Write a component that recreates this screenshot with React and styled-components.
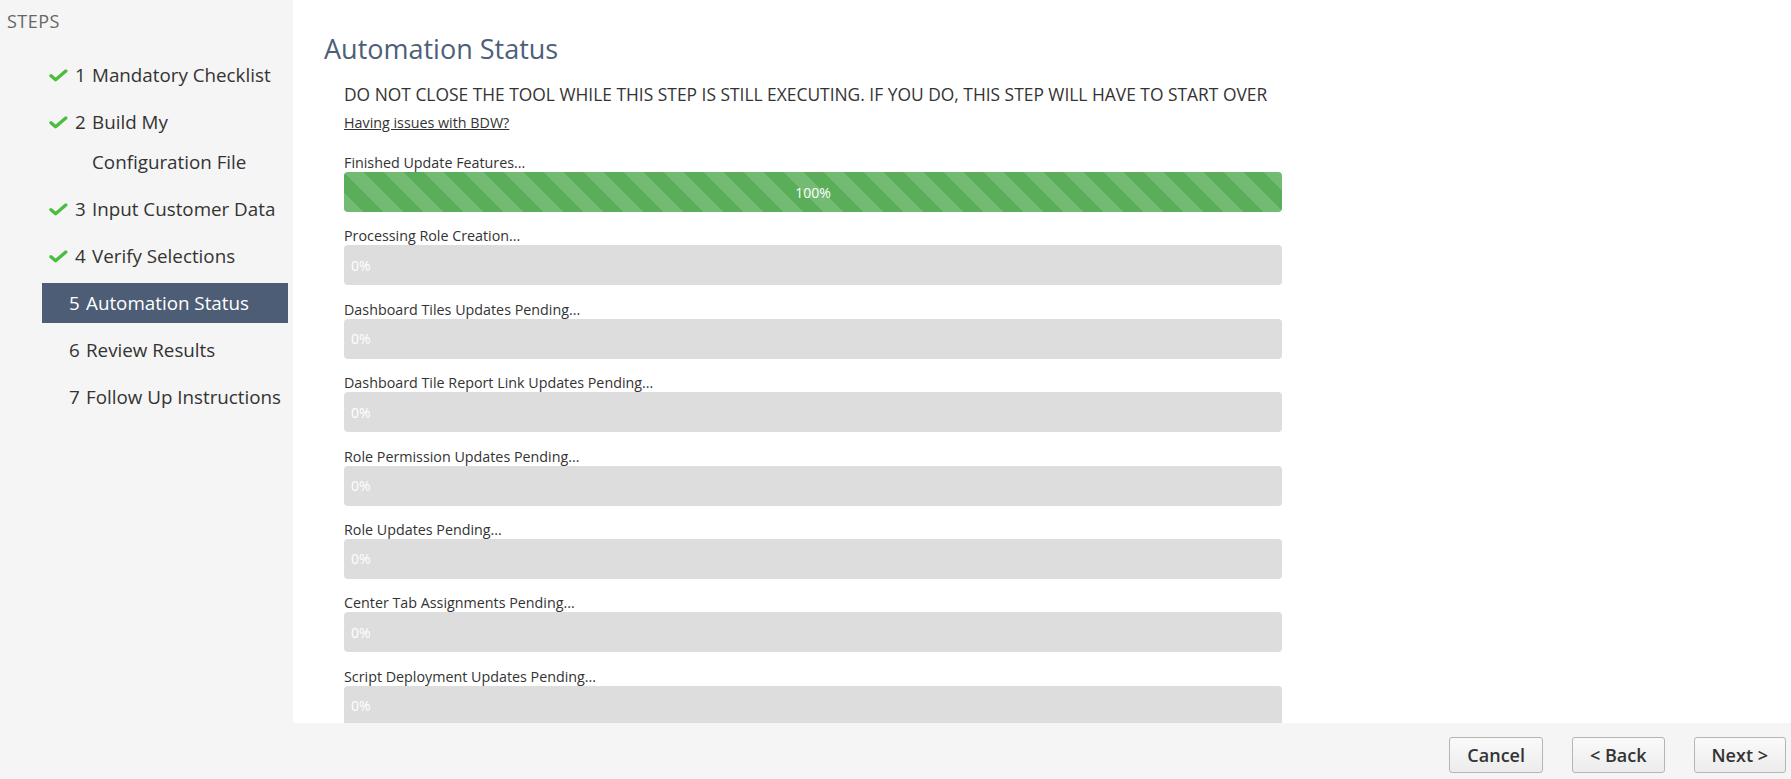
import React from "react";
import styled, { createGlobalStyle } from "styled-components";

const GlobalStyle = createGlobalStyle`
  html, body { margin: 0; padding: 0; }
  body {
    font-family: "Open Sans", "Noto Sans", "Liberation Sans", sans-serif;
    color: #333;
    background: #fff;
  }
  * { box-sizing: border-box; }
`;

const Page = styled.div`
  height: 100vh;
  display: grid;
  grid-template-rows: 1fr 56px;
  overflow: hidden;
`;

const Body = styled.div`
  display: flex;
  min-height: 0;
`;

const Sidebar = styled.aside`
  width: 293px;
  flex: none;
  background: #f5f5f5;
  padding: 9px 5px 0 0;
`;

const SidebarTitle = styled.div`
  font-size: 18px;
  line-height: 24px;
  letter-spacing: 0.5px;
  color: #666;
  padding-left: 7px;
  margin-bottom: 22px;
`;

const StepList = styled.ol`
  list-style: none;
  margin: 0;
  padding: 0 0 0 42px;
  display: flex;
  flex-direction: column;
  gap: 7px;
`;

const StepItem = styled.li`
  display: flex;
  align-items: flex-start;
  font-size: 18.8px;
  line-height: 40px;
  padding-left: ${(p) => (p.$done ? 7 : 27)}px;
  background: ${(p) => (p.$active ? "#4c5d75" : "transparent")};
  color: ${(p) => (p.$active ? "#fff" : "#333")};
`;

const IconSlot = styled.span`
  flex: none;
  height: 40px;
  width: 26px;
  display: flex;
  align-items: center;
`;

const StepNumber = styled.span`
  flex: none;
  width: 17px;
`;

const StepLabel = styled.span`
  flex: 1;
  min-width: 0;
`;

const Main = styled.main`
  flex: 1;
  min-width: 0;
  background: #fff;
  overflow: hidden;
  padding: 30px 0 0 31px;
`;

const Title = styled.h1`
  margin: 0;
  font-size: 27px;
  line-height: 38px;
  font-weight: 400;
  color: #4d6078;
`;

const Content = styled.div`
  width: 938px;
  margin: 14px 0 0 20px;
`;

const Warning = styled.p`
  margin: 0;
  font-size: 17.4px;
  line-height: 24px;
  color: #333;
  white-space: nowrap;
`;

const HelpLink = styled.a`
  display: inline-block;
  margin-top: 7px;
  font-size: 14.3px;
  line-height: 20px;
  color: #333;
  text-decoration: underline;
`;

const TaskList = styled.div`
  margin-top: 20px;
  display: flex;
  flex-direction: column;
  gap: 14.4px;
`;

const Task = styled.div``;

const TaskLabel = styled.div`
  font-size: 14.3px;
  line-height: 19px;
  color: #333;
`;

const Progress = styled.div`
  height: 40px;
  border-radius: 4px;
  background: #dddddd;
  overflow: hidden;
`;

const ProgressFill = styled.div`
  height: 100%;
  display: flex;
  align-items: center;
  font-size: 14px;
  color: #fff;
  justify-content: ${(p) => (p.$done ? "center" : "flex-start")};
  padding-left: ${(p) => (p.$done ? 0 : 7)}px;
  background-color: ${(p) => (p.$done ? "#5aae5a" : "transparent")};
  background-image: ${(p) =>
    p.$done
      ? "linear-gradient(45deg, rgba(255,255,255,.15) 25%, transparent 25%, transparent 50%, rgba(255,255,255,.15) 50%, rgba(255,255,255,.15) 75%, transparent 75%, transparent)"
      : "none"};
  background-size: 40px 40px;
  white-space: nowrap;
`;

const Footer = styled.footer`
  background: #f5f5f5;
  display: flex;
  justify-content: flex-end;
  align-items: flex-start;
  gap: 29px;
  padding: 14px 5px 0 0;
`;

const Button = styled.button`
  height: 36px;
  padding: 0 17px;
  font-family: inherit;
  font-size: 18px;
  font-weight: 600;
  color: #333;
  background: linear-gradient(#fafafa, #ececec);
  border: 1px solid #b5b5b5;
  border-radius: 3px;
  cursor: pointer;
`;

const Check = () => (
  <svg width="19" height="13" viewBox="0 0 19 13" aria-hidden="true">
    <path
      d="M2 6.8 L6.6 10.8 L16.8 2"
      fill="none"
      stroke="#4bbd3f"
      strokeWidth="3.4"
      strokeLinecap="round"
      strokeLinejoin="round"
    />
  </svg>
);

const steps = [
  { n: 1, label: "Mandatory Checklist", done: true },
  { n: 2, label: "Build My Configuration File", done: true },
  { n: 3, label: "Input Customer Data", done: true },
  { n: 4, label: "Verify Selections", done: true },
  { n: 5, label: "Automation Status", active: true },
  { n: 6, label: "Review Results" },
  { n: 7, label: "Follow Up Instructions" },
];

const tasks = [
  { label: "Finished Update Features...", pct: 100 },
  { label: "Processing Role Creation...", pct: 0 },
  { label: "Dashboard Tiles Updates Pending...", pct: 0 },
  { label: "Dashboard Tile Report Link Updates Pending...", pct: 0 },
  { label: "Role Permission Updates Pending...", pct: 0 },
  { label: "Role Updates Pending...", pct: 0 },
  { label: "Center Tab Assignments Pending...", pct: 0 },
  { label: "Script Deployment Updates Pending...", pct: 0 },
];

export default function App() {
  return (
    <>
      <GlobalStyle />
      <Page>
        <Body>
          <Sidebar>
            <SidebarTitle>STEPS</SidebarTitle>
            <StepList>
              {steps.map((s) => (
                <StepItem key={s.n} $done={s.done} $active={s.active}>
                  {s.done && (
                    <IconSlot>
                      <Check />
                    </IconSlot>
                  )}
                  <StepNumber>{s.n}</StepNumber>
                  <StepLabel>{s.label}</StepLabel>
                </StepItem>
              ))}
            </StepList>
          </Sidebar>
          <Main>
            <Title>Automation Status</Title>
            <Content>
              <Warning>
                DO NOT CLOSE THE TOOL WHILE THIS STEP IS STILL EXECUTING. IF YOU DO, THIS STEP WILL HAVE TO START OVER
              </Warning>
              <HelpLink href="#">Having issues with BDW?</HelpLink>
              <TaskList>
                {tasks.map((t) => (
                  <Task key={t.label}>
                    <TaskLabel>{t.label}</TaskLabel>
                    <Progress>
                      <ProgressFill
                        $done={t.pct === 100}
                        style={{ width: t.pct === 100 ? "100%" : "auto" }}
                      >
                        {t.pct}%
                      </ProgressFill>
                    </Progress>
                  </Task>
                ))}
              </TaskList>
            </Content>
          </Main>
        </Body>
        <Footer>
          <Button>Cancel</Button>
          <Button>&lt; Back</Button>
          <Button>Next &gt;</Button>
        </Footer>
      </Page>
    </>
  );
}
